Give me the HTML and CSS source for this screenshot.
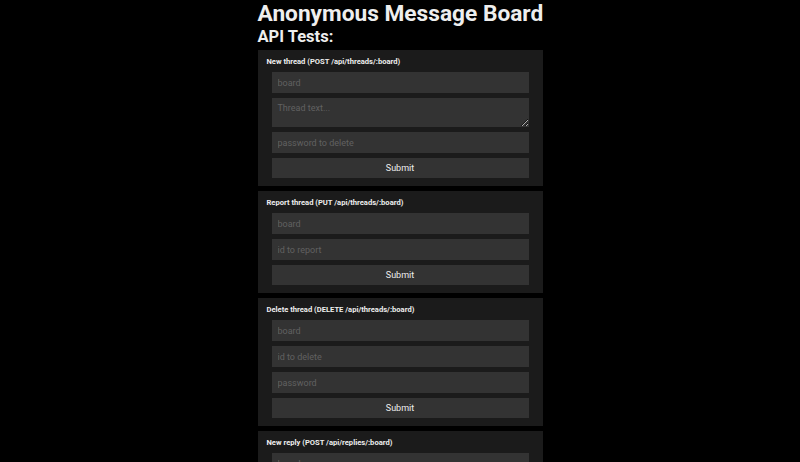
FILE: index.html
```html
<!DOCTYPE html>
<html>
<head>
<meta charset="utf-8">
<link rel="stylesheet" href="styles.css">
</head>
<body>
<div class="page">
  <h1 class="title">Anonymous Message Board</h1>
  <h2 class="subtitle">API Tests:</h2>
  <form class="card">
    <div class="label">New thread (POST /api/threads/:board)</div>
    <input class="field" type="text" placeholder="board">
    <textarea class="field area" placeholder="Thread text..."></textarea>
    <input class="field" type="text" placeholder="password to delete">
    <button class="submit" type="button">Submit</button>
  </form>
  <form class="card">
    <div class="label">Report thread (PUT /api/threads/:board)</div>
    <input class="field" type="text" placeholder="board">
    <input class="field" type="text" placeholder="id to report">
    <button class="submit" type="button">Submit</button>
  </form>
  <form class="card">
    <div class="label">Delete thread (DELETE /api/threads/:board)</div>
    <input class="field" type="text" placeholder="board">
    <input class="field" type="text" placeholder="id to delete">
    <input class="field" type="text" placeholder="password">
    <button class="submit" type="button">Submit</button>
  </form>
  <form class="card">
    <div class="label">New reply (POST /api/replies/:board)</div>
    <input class="field" type="text" placeholder="board">
    <input class="field" type="text" placeholder="thread id">
    <textarea class="field area" placeholder="Reply text..."></textarea>
    <input class="field" type="text" placeholder="password to delete">
    <button class="submit" type="button">Submit</button>
  </form>
</div>
</body>
</html>
```
FILE: styles.css
```css
html, body {
  margin: 0;
  padding: 0;
  background: #000;
}
body {
  font-family: Roboto, "Liberation Sans", sans-serif;
  color: #eee;
}
.page {
  width: 285px;
  margin: 0 auto;
  display: flex;
  flex-direction: column;
}
.title {
  margin: 0;
  font-size: 22.7px;
  font-weight: 700;
  line-height: 28px;
  color: #eee;
  white-space: nowrap;
}
.subtitle {
  margin: 0;
  font-size: 16.5px;
  font-weight: 700;
  line-height: 18px;
  color: #eee;
  margin-bottom: 4px;
}
.card {
  background: #1b1b1b;
  display: flex;
  flex-direction: column;
  gap: 5px;
  padding: 0 14px 8px 14px;
  margin-bottom: 5px;
}
.label {
  font-size: 7.6px;
  font-weight: 700;
  color: #eee;
  line-height: 10px;
  margin: 7px 0 0 -5px;
  height: 10px;
  white-space: nowrap;
}
.field {
  box-sizing: border-box;
  height: 21px;
  background: #333;
  border: none;
  outline: none;
  padding: 0 6px;
  font-family: Roboto, "Liberation Sans", sans-serif;
  font-size: 9px;
  color: #ddd;
}
.field::placeholder {
  color: #616161;
}
.area {
  height: 29px;
  padding-top: 5px;
  resize: vertical;
}
.submit {
  height: 20px;
  background: #333;
  border: none;
  color: #eee;
  font-family: Roboto, "Liberation Sans", sans-serif;
  font-size: 9px;
  padding: 0;
}
```
